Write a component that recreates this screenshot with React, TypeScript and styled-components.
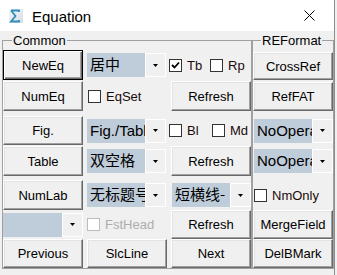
import React from "react";
import styled, { createGlobalStyle, css } from "styled-components";

const Global = createGlobalStyle`
  html, body { margin: 0; padding: 0; background: #f0f0f0; }
  body {
    font-family: "Liberation Sans", Arial, sans-serif;
    font-size: 13px;
    color: #000;
  }
`;

const Window = styled.div`
  box-sizing: border-box;
  width: 335px;
  height: 275px;
  border-right: 1px solid #8c8c8c;
  background: #f0f0f0;
`;

const TitleBar = styled.div`
  display: flex;
  align-items: center;
  height: 31px;
  background: #fff;
  padding-left: 8px;
  box-sizing: border-box;
`;

const Title = styled.span`
  font-family: "Liberation Sans", Arial, sans-serif;
  font-size: 15px;
  margin-left: 8px;
  margin-top: 1px;
  flex: 1;
`;

const CloseBox = styled.div`
  width: 46px;
  height: 31px;
  display: flex;
  align-items: center;
  justify-content: center;
  margin-right: 2px;
`;

const Client = styled.div`
  display: flex;
  align-items: flex-start;
  padding: 2px 0 0 2px;
`;

const Group = styled.fieldset<{ $w: number }>`
  box-sizing: border-box;
  width: ${(p) => p.$w}px;
  margin: 0;
  padding: 2px 0 0 0;
  min-width: 0;
  border: 1px solid #a0a0a0;
`;

const Legend = styled.legend<{ $ml: number }>`
  margin-left: ${(p) => p.$ml}px;
  padding: 0 1px;
  font-size: 13px;
  line-height: 15px;
  color: #000;
`;

const Row = styled.div<{ $mt: number; $h: number; $cols: string }>`
  display: grid;
  grid-template-columns: ${(p) => p.$cols};
  height: ${(p) => p.$h}px;
  margin-top: ${(p) => p.$mt}px;
`;

const Btn = styled.button<{ $def?: boolean; $top?: number; $end?: boolean }>`
  box-sizing: border-box;
  width: 80px;
  height: calc(100% - ${(p) => p.$top ?? 0}px);
  margin: ${(p) => p.$top ?? 0}px 0 0 0;
  justify-self: ${(p) => (p.$end ? "end" : "start")};
  padding: 0;
  font-family: "Liberation Sans", Arial, sans-serif;
  font-size: 13px;
  color: #000;
  background: #f0f0f0;
  border: 1px solid;
  border-color: #fff #696969 #696969 #fff;
  box-shadow: inset -1px -1px 0 #a0a0a0, inset 1px 1px 0 #e3e3e3;
  ${(p) =>
    p.$def &&
    css`
      border-color: #000;
      box-shadow: inset 1px 1px 0 #fff, inset -1px -1px 0 #696969,
        inset -2px -2px 0 #a0a0a0;
    `}
`;

const ComboBox = styled.div<{ $w: number; $end?: boolean }>`
  box-sizing: border-box;
  width: ${(p) => p.$w}px;
  height: 24px;
  align-self: center;
  justify-self: ${(p) => (p.$end ? "end" : "start")};
  display: grid;
  grid-template-columns: 1fr 20px;
  border: 1px solid #fff;
  background: #fff;
`;

const ComboValue = styled.div`
  background: #bfccda;
  overflow: hidden;
  white-space: nowrap;
  padding-left: 3px;
  font-family: "Liberation Sans", Arial, sans-serif;
  font-size: 15px;
  line-height: 23px;
  margin: -1px 0 -1px -1px;
`;

const CjkValue = styled(ComboValue)`
  font-family: "Noto Sans CJK SC", sans-serif;
  font-size: 15px;
  line-height: 22px;
`;

const ComboArrow = styled.div`
  display: flex;
  align-items: center;
  justify-content: center;
  background: #f0f0f0;
  border-left: 1px solid #fff;
`;

const CheckCell = styled.div<{ $pl?: number }>`
  display: flex;
  align-items: center;
  padding-left: ${(p) => p.$pl ?? 0}px;
`;

const CheckWrap = styled.label<{ $w?: number; $disabled?: boolean }>`
  display: flex;
  align-items: center;
  gap: 5px;
  width: ${(p) => (p.$w ? `${p.$w}px` : "auto")};
  color: ${(p) => (p.$disabled ? "#adadad" : "#1a0a0a")};
  font-size: 13px;
`;

const Box = styled.span<{ $disabled?: boolean }>`
  box-sizing: border-box;
  width: 13px;
  height: 13px;
  border: 1px solid ${(p) => (p.$disabled ? "#bcbcbc" : "#333")};
  background: #fff;
  display: flex;
  align-items: center;
  justify-content: center;
`;

const Arrow = () => (
  <svg width="5" height="3" viewBox="0 0 5 3">
    <polygon points="0,0 5,0 2.5,3" fill="#000" />
  </svg>
);

const Combo: React.FC<{ value: string; w?: number; end?: boolean; cjk?: boolean }> = ({
  value,
  w = 79,
  end,
  cjk,
}) => {
  const V = cjk ? CjkValue : ComboValue;
  return (
    <ComboBox $w={w} $end={end}>
      <V>{value}</V>
      <ComboArrow>
        <Arrow />
      </ComboArrow>
    </ComboBox>
  );
};

const Check: React.FC<{ label: string; checked?: boolean; w?: number; disabled?: boolean }> = ({
  label,
  checked,
  w,
  disabled,
}) => (
  <CheckWrap $w={w} $disabled={disabled}>
    <Box $disabled={disabled}>
      {checked && (
        <svg width="9" height="9" viewBox="0 0 9 9">
          <polyline points="1,4 3.5,6.5 8,1.5" fill="none" stroke="#000" strokeWidth="1.8" />
        </svg>
      )}
    </Box>
    <span>{label}</span>
  </CheckWrap>
);

const AppIcon = () => (
  <svg width="16" height="16" viewBox="0 0 16 16">
    <defs>
      <linearGradient id="pg" x1="0" y1="0" x2="1" y2="1">
        <stop offset="0" stopColor="#f4f6f8" />
        <stop offset="1" stopColor="#d5dde3" />
      </linearGradient>
    </defs>
    <rect x="1" y="1" width="14" height="14" fill="url(#pg)" />
    <path d="M3 2.5 H11 V4 M3 2.5 L7.5 8 L3 13.5 H11 V12" fill="none" stroke="#2f8fb8" strokeWidth="1.8" />
  </svg>
);

const LEFT_COLS = "84px 82px 1fr";
const RIGHT_COLS = "1fr";

export default function App() {
  return (
    <>
      <Global />
      <Window>
        <TitleBar>
          <AppIcon />
          <Title>Equation</Title>
          <CloseBox>
            <svg width="11" height="11" viewBox="0 0 11 11">
              <path d="M0.5 0.5 L10.5 10.5 M10.5 0.5 L0.5 10.5" stroke="#000" strokeWidth="1" />
            </svg>
          </CloseBox>
        </TitleBar>
        <Client>
          <Group $w={250}>
            <Legend $ml={9}>Common</Legend>
            <Row $mt={0} $h={30} $cols={LEFT_COLS}>
              <Btn $def>NewEq</Btn>
              <Combo value="居中" cjk />
              <CheckCell>
                <Check label="Tb" checked w={41} />
                <Check label="Rp" />
              </CheckCell>
            </Row>
            <Row $mt={1} $h={30} $cols={LEFT_COLS}>
              <Btn>NumEq</Btn>
              <CheckCell $pl={1}>
                <Check label="EqSet" />
              </CheckCell>
              <Btn $end>Refresh</Btn>
            </Row>
            <Row $mt={5} $h={29} $cols={LEFT_COLS}>
              <Btn>Fig.</Btn>
              <Combo value="Fig./Table" />
              <CheckCell>
                <Check label="Bl" w={43} />
                <Check label="Md" />
              </CheckCell>
            </Row>
            <Row $mt={1} $h={30} $cols={LEFT_COLS}>
              <Btn>Table</Btn>
              <Combo value="双空格" cjk />
              <Btn $end>Refresh</Btn>
            </Row>
            <Row $mt={4} $h={30} $cols={LEFT_COLS}>
              <Btn>NumLab</Btn>
              <Combo value="无标题号" cjk />
              <Combo value="短横线-" cjk end />
            </Row>
            <Row $mt={0} $h={29} $cols={LEFT_COLS}>
              <Combo value="" w={80} />
              <CheckCell>
                <Check label="FstHead" disabled />
              </CheckCell>
              <Btn $end>Refresh</Btn>
            </Row>
            <Row $mt={0} $h={29} $cols={LEFT_COLS}>
              <Btn>Previous</Btn>
              <Btn>SlcLine</Btn>
              <Btn $end>Next</Btn>
            </Row>
          </Group>
          <Group $w={82}>
            <Legend $ml={8}>REFormat</Legend>
            <Row $mt={0} $h={30} $cols={RIGHT_COLS}>
              <Btn $top={2}>CrossRef</Btn>
            </Row>
            <Row $mt={1} $h={30} $cols={RIGHT_COLS}>
              <Btn $top={1}>RefFAT</Btn>
            </Row>
            <Row $mt={5} $h={29} $cols={RIGHT_COLS}>
              <Combo value="NoOperation" end />
            </Row>
            <Row $mt={1} $h={30} $cols={RIGHT_COLS}>
              <Combo value="NoOperation" end />
            </Row>
            <Row $mt={4} $h={30} $cols={RIGHT_COLS}>
              <CheckCell $pl={1}>
                <Check label="NmOnly" />
              </CheckCell>
            </Row>
            <Row $mt={0} $h={29} $cols={RIGHT_COLS}>
              <Btn>MergeField</Btn>
            </Row>
            <Row $mt={0} $h={29} $cols={RIGHT_COLS}>
              <Btn>DelBMark</Btn>
            </Row>
          </Group>
        </Client>
      </Window>
    </>
  );
}
